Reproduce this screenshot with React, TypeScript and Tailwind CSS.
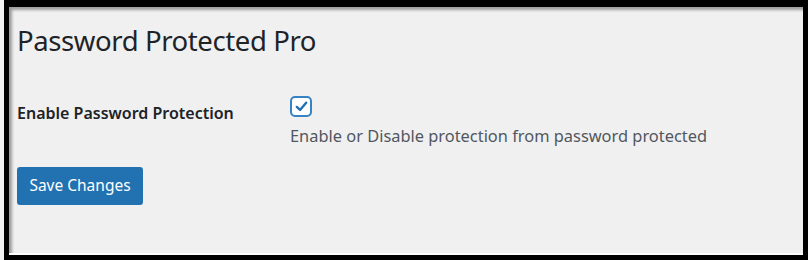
import React from 'react';

export default function App() {
  return (
    <div className="w-[808px] h-[260px] bg-black border-l-4 border-[#f2f2f2] pl-[5px] pt-[7px] pr-[5px] pb-[5px]" style={{ fontFamily: '"Noto Sans", sans-serif' }}>
      <div className="h-full bg-[#f0f0f1] border-b-2 border-white shadow-[inset_3px_3px_3px_rgba(0,0,0,0.35)] pl-[8px] pt-[16px]">
        <h1 className="text-[27.5px] leading-[36px] font-normal text-[#1d2327] tracking-[-0.4px]">Password Protected Pro</h1>
        <div className="flex mt-[37px]">
          <div className="w-[273px] pt-[6px] text-[16px] leading-[22px] font-semibold text-[#1d2327]">Enable Password Protection</div>
          <div className="flex flex-col">
            <div className="w-[22px] h-[21px] rounded-[5px] border-2 border-[#3582c4] bg-white flex items-center justify-center">
              <svg viewBox="0 0 20 20" className="w-[17px] h-[17px]">
                <path d="M4.5 10.5 L8.3 14 L15.5 5.5" fill="none" stroke="#2271b1" strokeWidth="2.8" strokeLinecap="round" strokeLinejoin="round" />
              </svg>
            </div>
            <p className="mt-[7px] text-[16.4px] leading-[24px] text-[#50575e]">Enable or Disable protection from password protected</p>
          </div>
        </div>
        <button className="mt-[19px] w-[126px] h-[38px] bg-[#2271b1] rounded-[3px] text-white text-[15.5px]">Save Changes</button>
      </div>
    </div>
  );
}
